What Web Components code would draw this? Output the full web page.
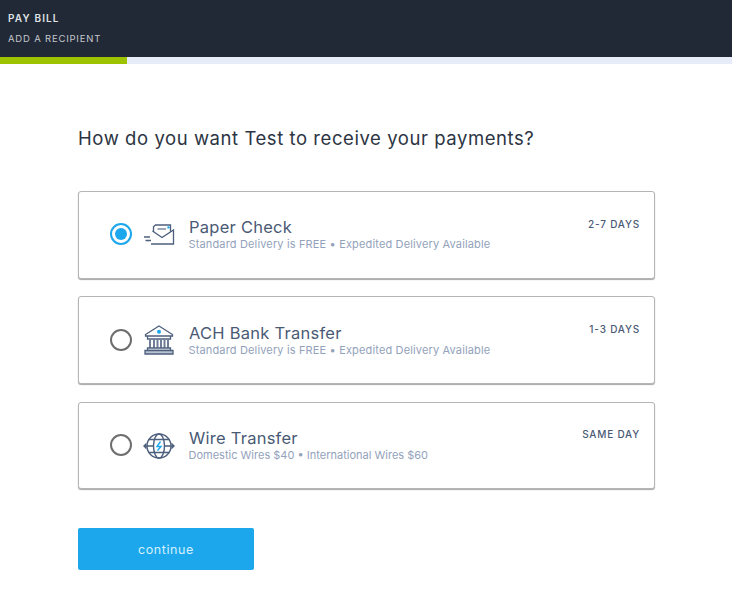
<!DOCTYPE html>
<html>
<head>
<meta charset="utf-8">
<title>Pay Bill</title>
<style>
  html, body { margin: 0; padding: 0; background: #fff; }
  body { font-family: Inter, "Liberation Sans", sans-serif; }
</style>
</head>
<body>
<pay-header></pay-header>
<main-panel>
  <span slot="title">How do you want Test to receive your payments?</span>
  <pay-option checked name="Paper Check" desc="Standard Delivery is FREE • Expedited Delivery Available" time="2-7 DAYS">
    <svg viewBox="0 0 32 22" width="32" height="22" fill="none" stroke="#4d5f7c" stroke-width="1.3">
      <path d="M10.5 8V2.8L12.5 1H27.5V7.5"/>
      <path d="M9.5 7L19 13.5L30.5 6V20H8"/>
      <path d="M14.5 5H23" stroke-width="1.1"/>
      <path d="M1 13H7M2.5 16.5H8" stroke-width="1.5"/>
      <circle cx="25.5" cy="3.4" r="1.2" fill="#1ca7ec" stroke="none"/>
    </svg>
  </pay-option>
  <pay-option name="ACH Bank Transfer" desc="Standard Delivery is FREE • Expedited Delivery Available" time="1-3 DAYS">
    <svg viewBox="0 0 30 30" width="30" height="30" fill="none" stroke="#4d5f7c" stroke-width="1.3">
      <path d="M15 1L28.5 9.5V11H1.5V9.5Z"/>
      <path d="M3.5 11V14H26.5V11"/>
      <path d="M6 14V23M10 14V23M13.5 14V23M17 14V23M20.5 14V23M24 14V23" stroke="#6f7f99" stroke-width="2"/>
      <path d="M3.5 23H26.5V25.5H3.5Z"/>
      <path d="M1 25.5H29V29H1Z" fill="#b9c2d1"/>
      <circle cx="15" cy="6.8" r="2" fill="#1ca7ec" stroke="none"/>
    </svg>
  </pay-option>
  <pay-option style="--desc-spacing: 0" name="Wire Transfer" desc="Domestic Wires $40 • International Wires $60" time="SAME DAY">
    <svg viewBox="0 0 32 28" width="32" height="28" fill="none" stroke="#4d5f7c" stroke-width="1.4">
      <circle cx="16" cy="14" r="12"/>
      <ellipse cx="16" cy="14" rx="5.5" ry="12"/>
      <path d="M5.5 7.5H26.5M5.5 20.5H26.5"/>
      <path d="M1 14H11M21 14H31M3.5 11.5L1 14L3.5 16.5M28.5 11.5L31 14L28.5 16.5"/>
      <path d="M17.5 9.5L14 14.5H18L14.5 18.5" stroke="#1ca7ec"/>
    </svg>
  </pay-option>
  <pay-button slot="action">continue</pay-button>
</main-panel>

<script>
class PayHeader extends HTMLElement {
  constructor() {
    super();
    this.attachShadow({ mode: 'open' });
    this.shadowRoot.innerHTML = `
      <style>
        :host { display: block; }
        .bar {
          height: 57px;
          box-sizing: border-box;
          padding: 12px 8px 0;
          background: #222936;
          color: #dfe1e5;
          font-size: 9.5px;
          letter-spacing: 0.8px;
        }
        .top { font-weight: 600; line-height: 12px; font-size: 10px; letter-spacing: 1.15px; }
        .sub { margin-top: 9px; line-height: 12px; color: #c4c7cd; }
        .progress { height: 7px; background: #e6ecf8; }
        .fill { width: 127px; height: 100%; background: #9cc200; }
      </style>
      <div class="bar">
        <div class="top">PAY BILL</div>
        <div class="sub">ADD A RECIPIENT</div>
      </div>
      <div class="progress"><div class="fill"></div></div>
    `;
  }
}

class MainPanel extends HTMLElement {
  constructor() {
    super();
    this.attachShadow({ mode: 'open' });
    this.shadowRoot.innerHTML = `
      <style>
        :host { display: block; padding: 62px 77px 0 78px; }
        h1 {
          margin: 0 0 41px;
          font-size: 18.5px;
          line-height: 24px;
          font-weight: 400;
          letter-spacing: 0.56px;
          color: #2c3443;
        }
        .list { display: flex; flex-direction: column; gap: 17.9px; }
        .action { margin-top: 38.7px; }
      </style>
      <h1><slot name="title"></slot></h1>
      <div class="list"><slot></slot></div>
      <div class="action"><slot name="action"></slot></div>
    `;
  }
}

class PayOption extends HTMLElement {
  constructor() {
    super();
    this.attachShadow({ mode: 'open' });
    this.shadowRoot.innerHTML = `
      <style>
        :host { display: block; }
        .card {
          position: relative;
          display: flex;
          align-items: center;
          height: 87.5px;
          box-sizing: border-box;
          padding-left: 31px;
          background: #fff;
          border: 1px solid #b5b5b5;
          border-radius: 3px;
          box-shadow: 0 1px 1px rgba(0,0,0,.35);
        }
        .radio {
          width: 22px;
          height: 22px;
          margin-top: -1px;
          box-sizing: border-box;
          border: 2px solid #6e6e6e;
          border-radius: 50%;
          flex: none;
          display: flex;
          align-items: center;
          justify-content: center;
        }
        :host([checked]) .radio { border-color: #1ca7ec; }
        :host([checked]) .radio::after {
          content: '';
          width: 12px;
          height: 12px;
          border-radius: 50%;
          background: #1ca7ec;
        }
        .icon { width: 32px; margin-left: 11px; flex: none; display: flex; justify-content: center; }
        .text { margin-left: 14px; }
        .name { font-size: 16.5px; line-height: 20px; color: #4a5a75; letter-spacing: 0.25px; margin-top: -1px; }
        .desc { font-size: 11px; line-height: 13px; margin-top: 1px; margin-left: -0.5px; color: #93a2bb; letter-spacing: var(--desc-spacing, 0.15px); }
        .time {
          position: absolute;
          top: 25.5px;
          right: 14px;
          font-size: 10px;
          line-height: 12px;
          font-weight: 500;
          letter-spacing: 0.8px;
          color: #4a5a75;
        }
      </style>
      <div class="card">
        <div class="radio"></div>
        <div class="icon"><slot></slot></div>
        <div class="text">
          <div class="name">${this.getAttribute('name')}</div>
          <div class="desc">${this.getAttribute('desc')}</div>
        </div>
        <div class="time">${this.getAttribute('time')}</div>
      </div>
    `;
  }
}

class PayButton extends HTMLElement {
  constructor() {
    super();
    this.attachShadow({ mode: 'open' });
    this.shadowRoot.innerHTML = `
      <style>
        :host { display: block; width: 176px; }
        button {
          display: block;
          width: 100%;
          height: 42px;
          padding: 1px 0 0;
          border: none;
          border-radius: 2px;
          background: #1ca7ec;
          color: #d4f0fd;
          font: 400 12.5px Inter, "Liberation Sans", sans-serif;
          letter-spacing: 0.6px;
          cursor: pointer;
        }
      </style>
      <button><slot></slot></button>
    `;
  }
}

customElements.define('pay-header', PayHeader);
customElements.define('main-panel', MainPanel);
customElements.define('pay-option', PayOption);
customElements.define('pay-button', PayButton);
</script>
</body>
</html>
